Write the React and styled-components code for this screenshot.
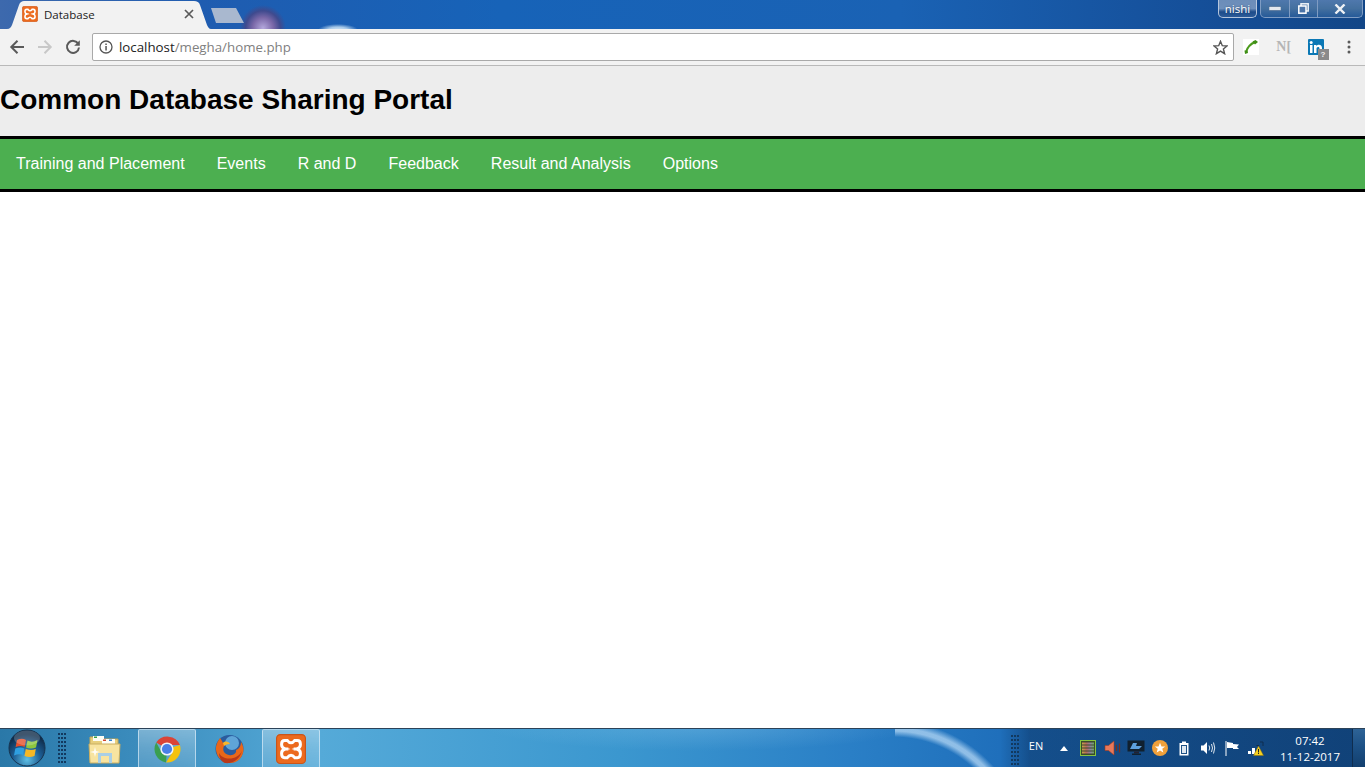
import React from 'react';
import styled, { createGlobalStyle } from 'styled-components';

const GlobalStyle = createGlobalStyle`
  html, body {
    margin: 0;
    height: 100%;
    overflow: hidden;
    background: #fff;
  }
  #root {
    height: 100%;
  }
`;

const Screen = styled.div`
  display: flex;
  flex-direction: column;
  height: 100vh;
  font-family: "Liberation Sans", Arial, sans-serif;
`;

/* browser chrome */
const TabStrip = styled.div`
  display: flex;
  align-items: flex-start;
  flex: none;
  height: 29px;
  padding-left: 7px;
  box-sizing: border-box;
  background:
    radial-gradient(ellipse 20px 6px at 338px 30px, #d4e6f6 0, #a6c8e8 50%, transparent 100%),
    radial-gradient(ellipse 23px 23px at 263px 28px, #b4a8dc 0, #7a68a8 45%, #3f4a8e 75%, transparent 100%),
    linear-gradient(90deg, #3d69ad 0, #1f5cb0 200px, #1763b8 500px, #1a62b4 900px, #154f99 1200px, #124687 1365px);
`;

const Tab = styled.div`
  display: flex;
  align-items: center;
  width: 204px;
  height: 28px;
  margin-top: 1px;
  padding: 0 15px 2px;
  box-sizing: border-box;
  background: #f2f2f2;
  clip-path: path('M0 28 C3 28 4 26 5 24 L12 4 C13 1 15 0 17 0 H187 C190 0 192 1 193 4 L200 24 C201 26 202 28 204 28 Z');
`;

const TabTitle = styled.span`
  margin-left: 6px;
  font-family: "Open Sans", sans-serif;
  font-size: 11.5px;
  color: #222;
`;

const TabClose = styled.svg`
  margin-left: auto;
  margin-right: 2px;
`;

const NewTab = styled.div`
  width: 33px;
  height: 15px;
  margin-top: 8px;
  background: #a9b8cf;
  clip-path: polygon(0 0, 25px 0, 33px 15px, 5px 15px);
`;

const WindowControls = styled.div`
  display: flex;
  margin-left: auto;
  margin-right: 2px;
`;

const UserBadge = styled.div`
  width: 39px;
  height: 18px;
  margin-right: 3px;
  box-sizing: border-box;
  border: 1px solid #b6c6dc;
  border-top: none;
  border-radius: 0 0 5px 5px;
  background: linear-gradient(180deg, #6b8db9 0, #6f90bb 50%, #1d4c8a 70%, #2c5c9a 100%);
  color: #fff;
  font-family: "Open Sans", sans-serif;
  font-size: 11.5px;
  line-height: 17px;
  text-align: center;
  text-shadow: 0 0 2px #24456f;
`;

const WindowButtons = styled.div`
  display: flex;
  height: 18px;
  box-sizing: border-box;
  border: 1px solid #7f9cc3;
  border-top: none;
  border-radius: 0 0 5px 5px;
  background: linear-gradient(180deg, #4f78ad 0, #44709f 50%, #265a99 100%);
`;

const WindowButton = styled.div`
  display: flex;
  align-items: center;
  justify-content: center;
  width: ${props => props.$width}px;
  box-sizing: border-box;
  border-left: ${props => props.$first ? 'none' : '1px solid #7f9cc3'};
`;

const Toolbar = styled.div`
  display: flex;
  align-items: center;
  flex: none;
  height: 37px;
  padding: 0 0 0 3px;
  box-sizing: border-box;
  background: #f2f2f2;
  border-bottom: 1px solid #b9b9b9;
`;

const NavIcon = styled.div`
  display: flex;
  align-items: center;
  justify-content: center;
  flex: none;
  width: 28px;
`;

const Omnibox = styled.div`
  display: flex;
  align-items: center;
  flex: 1;
  height: 28px;
  margin: 0 1px 0 5px;
  padding: 0 5px 0 6px;
  box-sizing: border-box;
  background: #fff;
  border: 1px solid #a9a9a9;
  border-radius: 2px;
`;

const Url = styled.span`
  margin-left: 6px;
  font-family: "Open Sans", sans-serif;
  font-size: 13.3px;
  color: #808080;
`;

const Host = styled.span`
  color: #222;
`;

const Star = styled.svg`
  margin-left: auto;
`;

const Extension = styled.div`
  position: relative;
  display: flex;
  align-items: center;
  justify-content: center;
  flex: none;
  width: 32.5px;
`;

const NoticeBadge = styled.span`
  position: absolute;
  right: 4px;
  bottom: -5px;
  width: 11px;
  height: 11px;
  background: #8a8a8a;
  color: #eee;
  font-size: 8px;
  font-weight: bold;
  line-height: 11px;
  text-align: center;
`;

const ExtensionLetter = styled.span`
  font-family: "Liberation Serif", serif;
  font-size: 14px;
  font-weight: bold;
  color: #b5b5b5;
`;

/* the page itself */
const Page = styled.main`
  flex: 1;
  background: #fff;
`;

const Header = styled.header`
  display: flex;
  align-items: center;
  height: 70px;
  padding-bottom: 3px;
  box-sizing: border-box;
  background: #ededed;
`;

const Title = styled.h1`
  margin: 0;
  font-size: 28px;
  font-weight: bold;
  color: #000;
`;

const NavBar = styled.nav`
  display: flex;
  border-top: 3px solid #000;
  border-bottom: 3px solid #000;
  background: #4caf50;
`;

const NavLink = styled.a`
  padding: 16px;
  font-size: 16px;
  line-height: 18px;
  letter-spacing: .012px;
  color: #fff;
  text-decoration: none;
`;

/* windows taskbar */
const Taskbar = styled.footer`
  display: flex;
  flex: none;
  height: 39px;
  box-sizing: border-box;
  border-top: 1px solid #2c4258;
  background:
    linear-gradient(90deg, transparent 0, transparent 1000px, rgba(12, 52, 100, .55) 1030px, rgba(12, 52, 100, .75) 1365px),
    radial-gradient(circle at -2px 127px, transparent 119px, rgba(190, 222, 248, .7) 125px, rgba(190, 222, 248, .7) 128px, transparent 135px) 895px 0 / 120px 100% no-repeat,
    radial-gradient(ellipse 220px 26px at 700px -4px, rgba(150, 205, 240, .3) 0, transparent 100%),
    linear-gradient(90deg, #2a78a8 0, #3a8bbc 130px, #55aad8 320px, #3b97cf 620px, #2a7fc6 850px, #1f6fbb 1000px, #1d6ab5 1365px);
`;

const Orb = styled.div`
  display: flex;
  align-items: center;
  justify-content: center;
  flex: none;
  width: 54px;
`;

const Gripper = styled.div`
  flex: none;
  width: 9px;
  height: 31px;
  margin: 4px 0 0 ${props => props.$left}px;
  background-image: radial-gradient(circle at 1px 1px, #12395f 1px, transparent 1.2px);
  background-size: 3px 4px;
`;

const TaskList = styled.div`
  display: flex;
  margin-left: 7px;
`;

const TaskButton = styled.div`
  display: flex;
  align-items: center;
  justify-content: center;
  width: 58px;
  margin: 0 2px;
  box-sizing: border-box;
  border: 1px solid ${props => props.$open ? 'rgba(225, 240, 250, .65)' : 'transparent'};
  border-bottom: none;
  border-radius: 2px 2px 0 0;
  background: ${props => props.$open
    ? 'linear-gradient(180deg, rgba(255,255,255,.32) 0, rgba(255,255,255,.2) 50%, rgba(255,255,255,.12) 100%)'
    : 'transparent'};
`;

const Tray = styled.div`
  display: flex;
  align-items: center;
  margin-left: auto;
`;

const Lang = styled.span`
  width: 32px;
  margin-top: -5px;
  font-family: "Open Sans", sans-serif;
  font-size: 11px;
  text-align: center;
  color: #fff;
`;

const TraySlot = styled.div`
  display: flex;
  align-items: center;
  justify-content: center;
  width: 24px;
  height: 100%;
`;

const Clock = styled.div`
  width: 84px;
  margin-top: 1px;
  font-family: "Open Sans", sans-serif;
  font-size: 11.5px;
  line-height: 16px;
  text-align: center;
  color: #fff;
`;

const ShowDesktop = styled.div`
  align-self: stretch;
  width: 13px;
  box-sizing: border-box;
  border-left: 1px solid #0f2d4e;
  background: linear-gradient(180deg, #2e6396 0, #1d5186 45%, #123f6e 100%);
`;

const XamppIcon = ({ size }) => (
  <svg width={size} height={size} viewBox="0 0 16 16">
    <rect x="0.3" y="0.3" width="15.4" height="15.4" rx="2" fill="#ec6a1e" stroke="#c9551a" strokeWidth=".6" />
    <path
      d="M4.6 3.4H6Q8 6 10 3.4H11.4Q13 3.4 13 5.3V5.9Q13 7.4 11 8Q13 8.6 13 10.1V10.7Q13 12.6 11.4 12.6H10Q8 10 6 12.600H4.600Q3 12.600 3 10.700V10.100Q3 8.600 5 8Q3 7.400 3 5.900V5.300Q3 3.400 4.600 3.400ZM5 8H6.600M9.400 8H11"
      fill="none"
      stroke="#fff"
      strokeWidth="1.600"
    />
  </svg>
);

const ChromeIcon = () => (
  <svg width="30" height="30" viewBox="0 0 30 30">
    <path d="M15 15L4.2 8.6A13.5 13.5 0 0 1 27.9 11H15Z" fill="#db4437" />
    <path d="M15 15L27.9 11A13.5 13.5 0 0 1 14 28.5L20 19Z" fill="#f4c20d" />
    <path d="M15 15L14 28.5A13.5 13.5 0 0 1 4.2 8.6L10 19Z" fill="#3a9f50" />
    <circle cx="15" cy="15" r="6.6" fill="#f1f4f8" />
    <circle cx="15" cy="15" r="5.1" fill="#4a80e8" />
  </svg>
);

const FirefoxIcon = () => (
  <svg width="32" height="32" viewBox="0 0 32 32">
    <circle cx="16.5" cy="16" r="14" fill="#2a5c9e" />
    <circle cx="19" cy="10" r="7" fill="#5fa5d8" />
    <path d="M7 5C5 8 2.500 12 3 17C4 25 10 30 17 30C25 30 30 24 30.500 17C30.500 14 29.500 11 28 9C28 13 26 16 23 17C24 20 20 23 16 22C11 21 9 17 11 13C13 11 15 11 17 11C15 9 12 9 10 10C9 8 8 6 7 5Z" fill="#e8671a" />
    <path d="M12 30C20 31 27 26 29 18C26 24 19 27 12 25C9 24 7 22 6 20C6 25 9 29 12 30Z" fill="#b8381a" />
    <path d="M10 10C12 8 15 8 17 11C14 11 12 12 11 13Z" fill="#f7b62d" />
  </svg>
);

const WindowsOrb = () => (
  <svg width="38" height="38" viewBox="0 0 38 38">
    <defs>
      <radialGradient id="orbFill" cx="50%" cy="82%" r="70%">
        <stop offset="0" stopColor="#5ec0e6" />
        <stop offset=".55" stopColor="#1c5c92" />
        <stop offset="1" stopColor="#0f2c4a" />
      </radialGradient>
    </defs>
    <circle cx="19" cy="19" r="18" fill="url(#orbFill)" stroke="#16334f" />
    <path d="M9 11Q14 8.500 18 11L16.600 18Q13 16 7.600 18Z" fill="#e5502c" />
    <path d="M19.500 11.500Q24 14 29.500 11L28 18.500Q23 20.500 18 18.500Z" fill="#8cc63f" />
    <path d="M7.300 19.500Q12.500 17.500 16.300 19.500L15 26Q11 24.500 6 26.500Z" fill="#2f9fe0" />
    <path d="M17.800 20Q23 22 27.800 20L26.500 27Q21.500 29 16.500 27Z" fill="#f7b824" />
    <ellipse cx="19" cy="9" rx="13" ry="7.500" fill="#fff" opacity=".2" />
  </svg>
);

const FolderIcon = () => (
  <svg width="34" height="32" viewBox="0 0 34 32">
    <path d="M2 4H13L15 6H30V27H2Z" fill="#e8cf7c" stroke="#c2a658" />
    <rect x="5" y="3" width="11" height="5" fill="#fdfdf5" />
    <rect x="6" y="3.500" width="3" height="1.500" fill="#3aa14a" />
    <rect x="14" y="6" width="13" height="5" fill="#fdfdf5" />
    <rect x="15" y="6.500" width="3" height="1.500" fill="#d2452f" />
    <rect x="21" y="6.500" width="3" height="1.500" fill="#3a84d0" />
    <path d="M1 11H32L31 30H2Z" fill="#f8e4a0" stroke="#c9ae62" />
    <path d="M10 20H24V30H21V23H13V30H10Z" fill="#a9cfe6" />
    <path d="M7 14L8 18L12 19L8 20L7 24L6 20L2 19L6 18Z" fill="#fff" opacity=".9" />
  </svg>
);

const MeterIcon = () => (
  <svg width="16" height="16" viewBox="0 0 16 16">
    <defs>
      <linearGradient id="meterBands" x1="0" x2="1" y1="0" y2="0">
        <stop offset="0" stopColor="#c9a24a" />
        <stop offset=".35" stopColor="#b9685c" />
        <stop offset=".7" stopColor="#8d7fa0" />
        <stop offset="1" stopColor="#6fa86a" />
      </linearGradient>
    </defs>
    <rect x=".5" y=".5" width="15" height="15" fill="#3a4a2a" stroke="#86c440" />
    <rect x="2" y="2.500" width="12" height="2" fill="url(#meterBands)" />
    <rect x="2" y="5.500" width="12" height="2" fill="url(#meterBands)" />
    <rect x="2" y="8.500" width="12" height="2" fill="url(#meterBands)" />
    <rect x="2" y="11.500" width="12" height="2" fill="url(#meterBands)" />
  </svg>
);

const MutedSpeakerIcon = () => (
  <svg width="17" height="16" viewBox="0 0 17 16">
    <path d="M1 5.500H4.500L10 1V15L4.500 10.500H1Z" fill="#e8785a" stroke="#a33b20" strokeWidth=".6" />
    <path d="M12.500 5V11M15.500 3.500V12.500" stroke="#7a2e1c" strokeWidth="1.200" />
  </svg>
);

const MonitorIcon = () => (
  <svg width="18" height="16" viewBox="0 0 18 16">
    <rect x=".5" y=".5" width="17" height="11" fill="#10202f" />
    <path d="M3 9L6 3H10L9 6H15L12 9Z" fill="#5d9fdc" />
    <rect x="7" y="11.500" width="5" height="2" fill="#223" />
    <rect x="5" y="13.500" width="9" height="1.500" fill="#10202f" />
  </svg>
);

const BadgeIcon = () => (
  <svg width="16" height="16" viewBox="0 0 16 16">
    <circle cx="8" cy="8" r="8" fill="#f0a03a" />
    <path d="M8 2.800L9.500 6.400H13.200L10.300 8.800L11.300 12.600L8 10.500L4.700 12.600L5.700 8.800L2.800 6.400H6.500Z" fill="#fff" />
  </svg>
);

const BatteryIcon = () => (
  <svg width="10" height="15" viewBox="0 0 10 15">
    <path d="M3 .5H7V2H9.500V14.500H.5V2H3Z" fill="#fff" />
    <rect x="2" y="4" width="6" height="9" fill="#1d5186" />
    <rect x="3" y="5" width="4" height="7" fill="#dfe8f0" />
  </svg>
);

const SpeakerIcon = () => (
  <svg width="16" height="14" viewBox="0 0 16 14">
    <path d="M1 4.500H3.500L7 1V13L3.500 9.500H1Z" fill="#fff" />
    <path d="M9 4.500Q10.500 7 9 9.500M11.500 3Q13.500 7 11.500 11M13.500 1.500Q16 7 13.500 12.500" fill="none" stroke="#dfe8f0" strokeWidth="1" />
  </svg>
);

const FlagIcon = () => (
  <svg width="15" height="15" viewBox="0 0 15 15">
    <path d="M1 0V15" stroke="#fff" strokeWidth="1" />
    <path d="M2 1L8 2V3L14 3.500L12 6L14 8L8 8V7L2 7Z" fill="#fff" />
  </svg>
);

const SignalIcon = () => (
  <svg width="16" height="15" viewBox="0 0 16 15">
    <rect x="0" y="10" width="3" height="3" fill="#fff" />
    <rect x="4" y="7" width="3" height="6" fill="#fff" />
    <path d="M8.500 4.500H11M12 1H15V5" fill="none" stroke="#0f2d4e" />
    <path d="M10.500 5L15.500 14.500H5.500Z" fill="#f5d020" stroke="#8a7010" strokeWidth=".5" />
    <rect x="10" y="8" width="1" height="3.500" fill="#222" />
    <rect x="10" y="12" width="1" height="1" fill="#222" />
  </svg>
);

const PhoneIcon = () => (
  <svg width="16" height="16" viewBox="0 0 16 16">
    <rect width="16" height="16" fill="#fff" />
    <path d="M3 13Q5 6 12 3" fill="none" stroke="#4b9a1c" strokeWidth="2" />
    <path d="M9.500 2.500L12.500 1L15 3L12 5.500Z" fill="#3f8f16" />
    <path d="M1.500 11.500L4.500 11.500L5 14L2 15Z" fill="#3f8f16" />
  </svg>
);

const LinkedInIcon = () => (
  <svg width="16" height="16" viewBox="0 0 16 16">
    <rect width="16" height="16" rx="1" fill="#0b78b5" />
    <rect x="2" y="6" width="2.500" height="8" fill="#fff" />
    <circle cx="3.200" cy="3.400" r="1.500" fill="#fff" />
    <path d="M6 6H8.400V7.200C9 6.200 10 5.800 11 5.800C13 5.800 14 7 14 9.200V14H11.500V9.800C11.500 8.600 11 8 10 8C9 8 8.500 8.700 8.500 9.800V14H6Z" fill="#fff" />
  </svg>
);

const navItems = ['Training and Placement', 'Events', 'R and D', 'Feedback', 'Result and Analysis', 'Options'];

export default function App() {
  return (
    <Screen>
      <GlobalStyle />

      <TabStrip>
        <Tab>
          <XamppIcon size={16} />
          <TabTitle>Database</TabTitle>
          <TabClose width="10" height="10" viewBox="0 0 10 10">
            <path d="M1 1L9 9M9 1L1 9" stroke="#5a5a5a" strokeWidth="1.700" />
          </TabClose>
        </Tab>
        <NewTab />
        <WindowControls>
          <UserBadge>nishi</UserBadge>
          <WindowButtons>
            <WindowButton $first $width={28}>
              <svg width="12" height="5" viewBox="0 0 12 5"><rect y=".5" width="12" height="4" fill="#e4e8ee" stroke="#33557f" strokeWidth=".5" /></svg>
            </WindowButton>
            <WindowButton $width={28}>
              <svg width="11" height="11" viewBox="0 0 11 11">
                <rect x="3" y=".8" width="7.200" height="7.200" fill="none" stroke="#eef3f8" strokeWidth="1.500" />
                <rect x=".8" y="3" width="7.200" height="7.200" fill="#4b74a8" stroke="#fff" strokeWidth="1.500" />
              </svg>
            </WindowButton>
            <WindowButton $width={45}>
              <svg width="12" height="10" viewBox="0 0 12 10"><path d="M1.500 .5L10.500 9.500M10.500 .5L1.500 9.500" stroke="#eef1f5" strokeWidth="2.400" /></svg>
            </WindowButton>
          </WindowButtons>
        </WindowControls>
      </TabStrip>

      <Toolbar>
        <NavIcon>
          <svg width="16" height="16" viewBox="0 0 16 16"><path d="M15 8H2.500M8.500 1.800L2.300 8L8.500 14.200" fill="none" stroke="#5a5a5a" strokeWidth="2" /></svg>
        </NavIcon>
        <NavIcon>
          <svg width="16" height="16" viewBox="0 0 16 16"><path d="M1 8H13.500M7.500 1.800L13.700 8L7.500 14.200" fill="none" stroke="#c8c8c8" strokeWidth="2" /></svg>
        </NavIcon>
        <NavIcon>
          <svg width="16" height="16" viewBox="0 0 16 16">
            <path d="M13.300 5A6 6 0 1 0 14 8.500" fill="none" stroke="#5a5a5a" strokeWidth="2" />
            <path d="M14.800 1.200V6.800H9.200Z" fill="#5a5a5a" />
          </svg>
        </NavIcon>
        <Omnibox>
          <svg width="14" height="14" viewBox="0 0 14 14">
            <circle cx="7" cy="7" r="6" fill="none" stroke="#555" strokeWidth="1.300" />
            <rect x="6.300" y="6" width="1.500" height="4.500" fill="#555" />
            <rect x="6.300" y="3.500" width="1.500" height="1.500" fill="#555" />
          </svg>
          <Url><Host>localhost</Host>/megha/home.php</Url>
          <Star width="15" height="15" viewBox="0 0 15 15">
            <path d="M7.500 1.300L9.300 5.700L14 6L10.400 9L11.600 13.700L7.500 11.100L3.400 13.700L4.600 9L1 6L5.700 5.700Z" fill="none" stroke="#555" strokeWidth="1.400" />
          </Star>
        </Omnibox>
        <Extension><PhoneIcon /></Extension>
        <Extension><ExtensionLetter>N[</ExtensionLetter></Extension>
        <Extension>
          <LinkedInIcon />
          <NoticeBadge>?</NoticeBadge>
        </Extension>
        <Extension>
          <svg width="4" height="14" viewBox="0 0 4 14">
            <circle cx="2" cy="2" r="1.500" fill="#5a5a5a" />
            <circle cx="2" cy="7" r="1.500" fill="#5a5a5a" />
            <circle cx="2" cy="12" r="1.500" fill="#5a5a5a" />
          </svg>
        </Extension>
      </Toolbar>

      <Page>
        <Header>
          <Title>Common Database Sharing Portal</Title>
        </Header>
        <NavBar>
          {navItems.map(item => <NavLink key={item} href="#">{item}</NavLink>)}
        </NavBar>
      </Page>

      <Taskbar>
        <Orb><WindowsOrb /></Orb>
        <Gripper $left={4} />
        <TaskList>
          <TaskButton><FolderIcon /></TaskButton>
          <TaskButton $open><ChromeIcon /></TaskButton>
          <TaskButton><FirefoxIcon /></TaskButton>
          <TaskButton $open><XamppIcon size={30} /></TaskButton>
        </TaskList>
        <Tray>
          <Gripper $left={0} />
          <Lang>EN</Lang>
          <TraySlot>
            <svg width="8" height="5" viewBox="0 0 8 5"><path d="M4 0L8 5H0Z" fill="#fff" /></svg>
          </TraySlot>
          <TraySlot><MeterIcon /></TraySlot>
          <TraySlot><MutedSpeakerIcon /></TraySlot>
          <TraySlot><MonitorIcon /></TraySlot>
          <TraySlot><BadgeIcon /></TraySlot>
          <TraySlot><BatteryIcon /></TraySlot>
          <TraySlot><SpeakerIcon /></TraySlot>
          <TraySlot><FlagIcon /></TraySlot>
          <TraySlot><SignalIcon /></TraySlot>
          <Clock>07:42<br />11-12-2017</Clock>
          <ShowDesktop />
        </Tray>
      </Taskbar>
    </Screen>
  );
}
